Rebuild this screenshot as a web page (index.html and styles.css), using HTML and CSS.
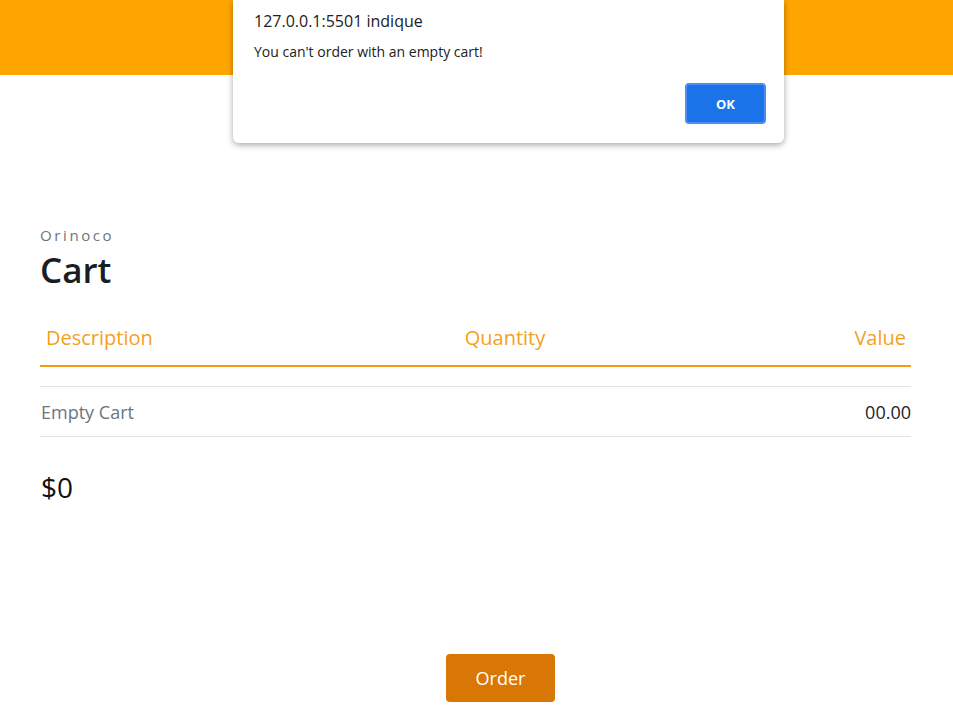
FILE: index.html
```html
<!DOCTYPE html>
<html lang="en">
<head>
<meta charset="utf-8">
<title>Cart</title>
<link rel="stylesheet" href="styles.css">
</head>
<body>
<header class="topbar"></header>
<main class="page">
  <section class="heading">
    <p class="brand">Orinoco</p>
    <h1 class="title">Cart</h1>
  </section>
  <section class="cart">
    <div class="cart-head">
      <span class="col-desc">Description</span>
      <span class="col-qty">Quantity</span>
      <span class="col-val">Value</span>
    </div>
    <div class="cart-spacer"></div>
    <div class="cart-row">
      <span class="row-desc">Empty Cart</span>
      <span class="row-val">00.00</span>
    </div>
  </section>
  <p class="total">$0</p>
  <div class="actions">
    <button class="order-btn">Order</button>
  </div>
</main>
<div class="alert">
  <p class="alert-title">127.0.0.1:5501 indique</p>
  <p class="alert-msg">You can't order with an empty cart!</p>
  <div class="alert-actions">
    <button class="alert-ok">OK</button>
  </div>
</div>
</body>
</html>
```
FILE: styles.css
```css
* { box-sizing: border-box; }
html, body { margin: 0; padding: 0; }
body {
  font-family: "Open Sans", "Noto Sans", sans-serif;
  background: #fff;
  color: #212529;
  width: 953px;
  height: 724px;
  overflow: hidden;
  position: relative;
}
.topbar {
  height: 75px;
  background: #ffa500;
}
.page {
  padding: 0 42px 0 40px;
}
.heading {
  padding-top: 149px;
}
.brand {
  margin: 0;
  font-size: 15px;
  letter-spacing: 2.6px;
  color: #6c757d;
  line-height: 22px;
}
.title {
  margin: 0;
  font-size: 35px;
  font-weight: 600;
  line-height: 47px;
  color: #1a1e24;
}
.cart {
  margin-top: 20px;
}
.cart-head {
  display: grid;
  grid-template-columns: 1fr auto 1fr;
  align-items: start;
  padding: 11px 5px 0 6px;
  height: 54px;
  border-bottom: 2px solid #f29d12;
  color: #f59f1e;
  font-size: 20px;
  line-height: 28px;
}
.col-qty { margin-left: 58px; }
.col-val { text-align: right; }
.cart-spacer {
  height: 20px;
  border-bottom: 1px solid #e3e3e3;
}
.cart-row {
  display: flex;
  justify-content: space-between;
  align-items: center;
  height: 50px;
  border-bottom: 1px solid #e3e3e3;
  font-size: 18px;
  padding-left: 1px;
}
.row-desc { color: #6c757d; }
.row-val { color: #212529; }
.total {
  margin: 28px 0 0 1px;
  font-size: 28px;
  line-height: 44px;
  color: #111;
}
.actions {
  display: flex;
  justify-content: center;
  padding-top: 145px;
  padding-left: 50px;
}
.order-btn {
  width: 109px;
  height: 48px;
  background: #d97706;
  color: #fff;
  border: none;
  border-radius: 4px;
  font-family: inherit;
  font-size: 18px;
}
.alert {
  position: absolute;
  left: 233px;
  top: 0;
  width: 551px;
  height: 143px;
  background: #fff;
  border-radius: 0 0 6px 6px;
  box-shadow: 0 2px 6px rgba(0,0,0,0.35);
  padding: 10px 18px 0 21px;
}
.alert-title {
  margin: 0;
  font-size: 16px;
  line-height: 22px;
  color: #202124;
}
.alert-msg {
  margin: 10px 0 0;
  font-size: 14px;
  line-height: 20px;
  color: #202124;
}
.alert-actions {
  display: flex;
  justify-content: flex-end;
  margin-top: 21px;
}
.alert-ok {
  width: 81px;
  height: 41px;
  background: #1a73e8;
  border: 2px solid #4d8ff0;
  border-radius: 4px;
  color: #fff;
  font-family: inherit;
  font-weight: 700;
  font-size: 13px;
}
```
